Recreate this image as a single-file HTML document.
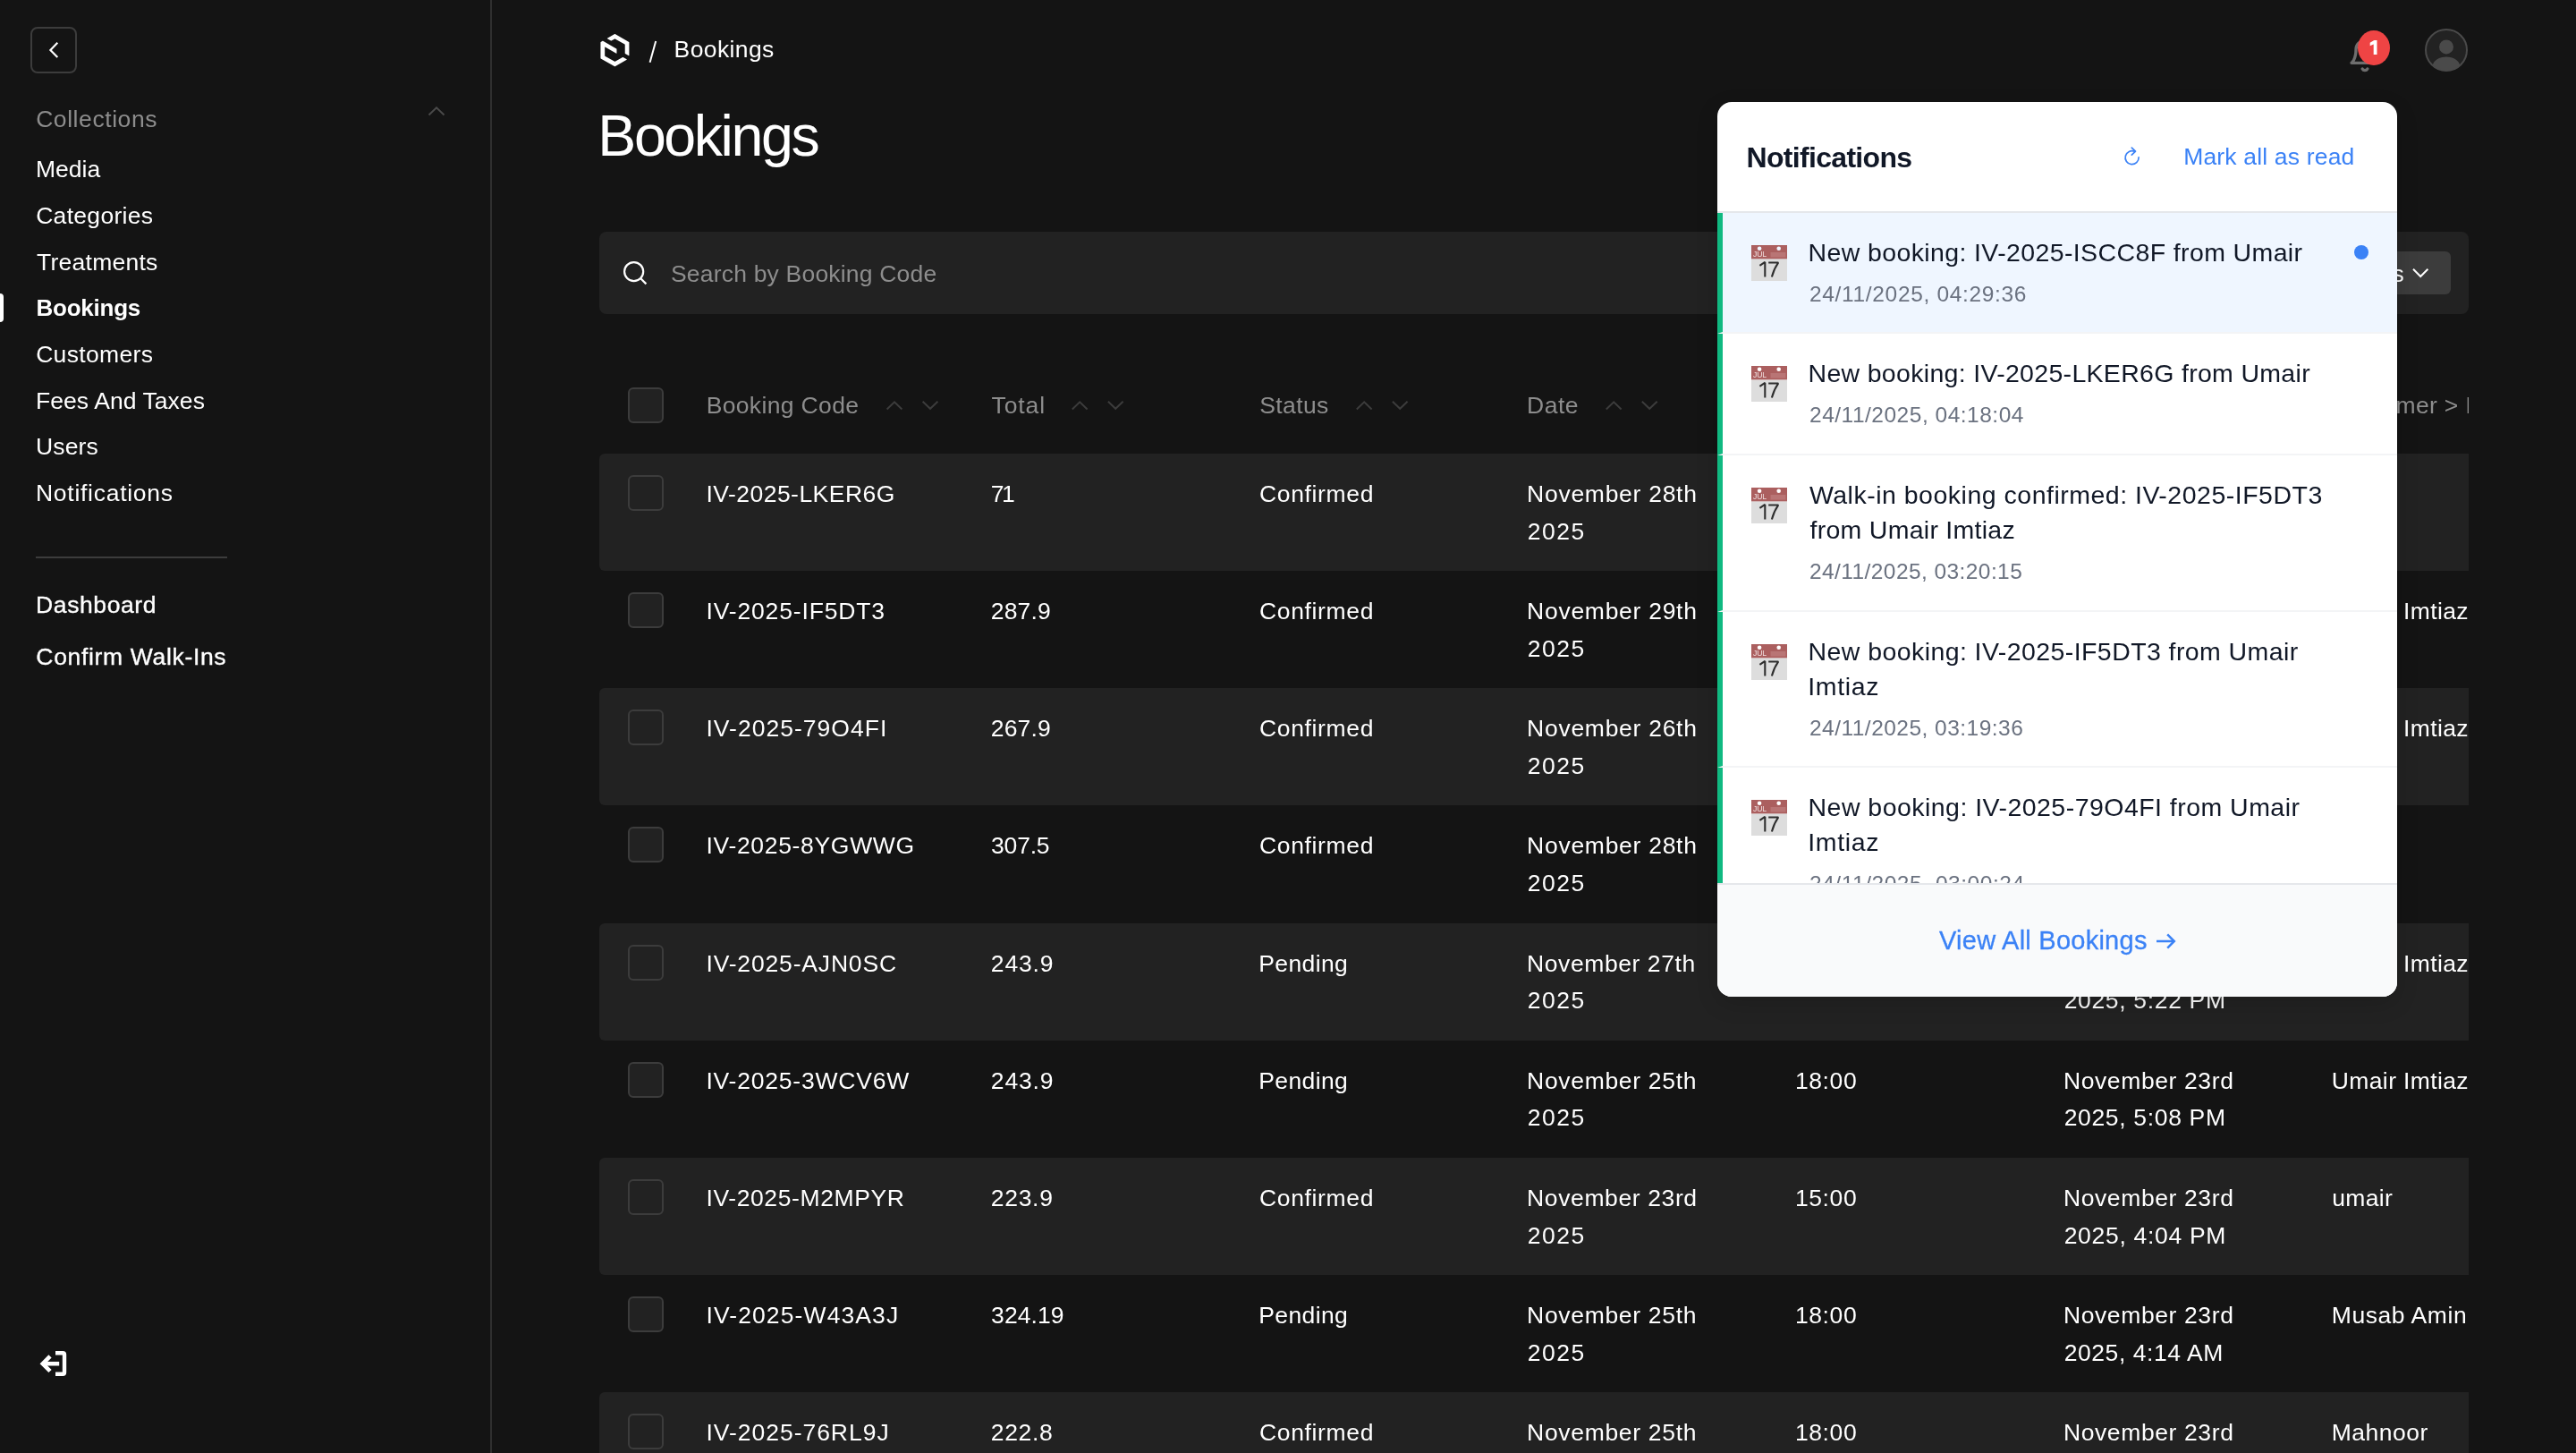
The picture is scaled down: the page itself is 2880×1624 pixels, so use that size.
<!DOCTYPE html>
<html><head><meta charset="utf-8"><title>Bookings</title>
<style>
html,body{margin:0;padding:0;background:#141414;}
body{width:2880px;height:1624px;overflow:hidden;position:relative;font-family:"Liberation Sans",sans-serif;}
.abs{position:absolute;}
.t{position:absolute;white-space:pre;font-family:"Liberation Sans",sans-serif;}
svg{overflow:visible;display:block}
#root{position:absolute;left:0;top:0;width:2880px;height:1624px;will-change:transform;transform:translateZ(0);}
</style></head><body><div id="root">
<div class="abs" style="left:548px;top:0;width:2px;height:1624px;background:#2f2f2f"></div>
<div class="abs" style="left:34px;top:30px;width:52px;height:52px;border:2px solid #3c3c3c;border-radius:8px;box-sizing:border-box"></div>
<svg class="abs" style="left:34px;top:30px" width="52" height="52" viewBox="0 0 52 52"><path d="M30.3 17.7 L22.4 25.9 L30.3 34.1" fill="none" stroke="#fff" stroke-width="2.2" stroke-linecap="butt" stroke-linejoin="miter"/></svg>
<span class="t " style="left:40.15px;top:115.51px;font-size:26.5px;line-height:34px;color:#8d8d8d;letter-spacing:0.570px;">Collections</span>
<svg class="abs" style="left:476px;top:114px" width="24" height="20" viewBox="0 0 24 20"><path d="M3.5 14.5 L12 6.4 L20.5 14.5" fill="none" stroke="#4a4a4a" stroke-width="2"/></svg>
<span class="t " style="left:39.90px;top:172.41px;font-size:26.5px;line-height:34px;color:#fff;letter-spacing:0.038px;">Media</span>
<span class="t " style="left:40.15px;top:224.03px;font-size:26.5px;line-height:34px;color:#fff;letter-spacing:0.306px;">Categories</span>
<span class="t " style="left:41.10px;top:275.65px;font-size:26.5px;line-height:34px;color:#fff;letter-spacing:0.250px;">Treatments</span>
<span class="t " style="left:40.50px;top:326.95px;font-size:26px;line-height:34px;color:#fff;font-weight:700;letter-spacing:-0.243px;">Bookings</span>
<span class="t " style="left:40.15px;top:378.89px;font-size:26.5px;line-height:34px;color:#fff;letter-spacing:0.337px;">Customers</span>
<span class="t " style="left:40.00px;top:430.51px;font-size:26.5px;line-height:34px;color:#fff;letter-spacing:0.065px;">Fees And Taxes</span>
<span class="t " style="left:39.90px;top:482.13px;font-size:26.5px;line-height:34px;color:#fff;letter-spacing:0.175px;">Users</span>
<span class="t " style="left:40.00px;top:533.75px;font-size:26.5px;line-height:34px;color:#fff;letter-spacing:0.725px;">Notifications</span>
<div class="abs" style="left:0;top:328px;width:4px;height:32px;background:#fff;border-radius:0 4px 4px 0"></div>
<div class="abs" style="left:40px;top:622px;width:214px;height:2px;background:#3c3c3c"></div>
<span class="t " style="left:40.10px;top:658.61px;font-size:26.5px;line-height:34px;color:#fff;letter-spacing:0.594px;-webkit-text-stroke:0.35px #fff;">Dashboard</span>
<span class="t " style="left:40.35px;top:716.71px;font-size:26.5px;line-height:34px;color:#fff;letter-spacing:0.670px;-webkit-text-stroke:0.35px #fff;">Confirm Walk-Ins</span>
<svg class="abs" style="left:40px;top:1504px" width="40" height="40" viewBox="0 0 40 40"><path d="M22 8.3 H30.2 a1.8 1.8 0 0 1 1.8 1.8 V29.9 a1.8 1.8 0 0 1 -1.8 1.8 H22" fill="none" stroke="#fff" stroke-width="4.4" stroke-linejoin="round"/><path d="M26.2 20.2 H10" fill="none" stroke="#fff" stroke-width="4.6"/><path d="M16 11.9 L7.8 20.2 L16 28.5" fill="none" stroke="#fff" stroke-width="4.6" stroke-linejoin="miter"/></svg>
<svg class="abs" style="left:670.1px;top:37.7px" width="36.3" height="36.3" viewBox="0 0 25 25"><path d="M11.8673 21.2336L4.40922 16.9845C4.31871 16.9309 4.25837 16.8355 4.25837 16.7282V10.1609C4.25837 10.0477 4.38508 9.97616 4.48162 10.0298L13.1404 14.9642C13.2611 15.0358 13.412 14.9464 13.412 14.8093V11.6091C13.412 11.4839 13.3456 11.3647 13.2309 11.2992L2.81624 5.36353C2.72573 5.30989 2.60505 5.30989 2.51454 5.36353L1.15085 6.14422C1.06034 6.19786 1 6.29321 1 6.40048V18.5995C1 18.7068 1.06034 18.8021 1.15085 18.8558L11.8491 24.9583C11.9397 25.0119 12.0603 25.0119 12.1509 24.9583L21.1355 19.8331C21.2562 19.7616 21.2562 19.5948 21.1355 19.5232L18.3357 17.9261C18.2211 17.8605 18.0883 17.8605 17.9737 17.9261L12.175 21.2336C12.0845 21.2872 11.9638 21.2872 11.8733 21.2336H11.8673Z" fill="#fff"/><path d="M22.8491 6.13827L12.1508 0.0417218C12.0603 -0.0119135 11.9397 -0.0119135 11.8491 0.0417218L6.19528 3.2658C6.0746 3.33731 6.0746 3.50418 6.19528 3.57569L8.97092 5.16091C9.08557 5.22646 9.21832 5.22646 9.33296 5.16091L11.8672 3.71872C11.9578 3.66508 12.0784 3.66508 12.1689 3.71872L19.627 7.96782C19.7175 8.02146 19.7778 8.11681 19.7778 8.22408V14.8212C19.7778 14.9464 19.8442 15.0656 19.9589 15.1311L22.7345 16.7104C22.8552 16.7819 23.006 16.6925 23.006 16.5554V6.40048C23.006 6.29321 22.9457 6.19786 22.8552 6.14422L22.8491 6.13827Z" fill="#fff"/></svg>
<svg class="abs" style="left:720px;top:40px" width="20" height="36" viewBox="0 0 20 36"><path d="M13.2 5.9 L6.6 29.8" stroke="#fff" stroke-width="2" fill="none"/></svg>
<span class="t " style="left:753.60px;top:38.21px;font-size:26.5px;line-height:34px;color:#fff;letter-spacing:0.393px;">Bookings</span>
<svg class="abs" style="left:2624px;top:41.7px" width="40" height="40" viewBox="0 0 24 24" fill="none" stroke="#6e6e6e" stroke-width="2" stroke-linecap="round" stroke-linejoin="round"><path d="M6 8a6 6 0 0 1 12 0c0 7 3 9 3 9H3s3-2 3-9"/><path d="M10.3 21a1.94 1.94 0 0 0 3.4 0"/></svg>
<div class="abs" style="left:2635.9px;top:33.9px;width:36.2px;height:39.3px;border-radius:50%;background:#ef4444"></div>
<svg class="abs" style="left:2640px;top:40px" width="30" height="30" viewBox="2640 40 30 30"><path d="M2654.3 45.1 H2657.5 V61 H2653.7 V49.4 L2649.7 51.2 V47.8 Z" fill="#fff"/></svg>
<svg class="abs" style="left:2710px;top:31px" width="50" height="50" viewBox="0 0 25 25"><circle cx="12.5" cy="12.5" r="11.5" fill="#222222" stroke="#4a4a4a" stroke-width="1"/><circle cx="12.5" cy="10.73" r="3.98" fill="#4a4a4a"/><path d="M12.5,24a11.44,11.44,0,0,0,7.66-2.94c-.5-2.71-3.73-4.8-7.66-4.8s-7.16,2.09-7.66,4.8A11.44,11.44,0,0,0,12.5,24Z" fill="#4a4a4a"/></svg>
<span class="t " style="left:668.35px;top:109.74px;font-size:64.5px;line-height:84px;color:#fff;letter-spacing:-2.436px;">Bookings</span>
<div class="abs" style="left:670px;top:259px;width:2090px;height:92px;background:#222222;border-radius:8px"></div>
<svg class="abs" style="left:690px;top:286px" width="40" height="40" viewBox="0 0 40 40"><circle cx="18.65" cy="17.6" r="10.55" fill="none" stroke="#fff" stroke-width="2.2"/><path d="M26.1 25.05 L32.4 31.35" stroke="#fff" stroke-width="2.2" fill="none"/></svg>
<span class="t " style="left:750.00px;top:289.11px;font-size:26.5px;line-height:34px;color:#8d8d8d;letter-spacing:0.193px;">Search by Booking Code</span>
<div class="abs" style="left:2560px;top:281px;width:180px;height:48px;background:#3c3c3c;border-radius:6px"></div>
<span class="t " style="left:2608.00px;top:288.51px;font-size:26.5px;line-height:34px;color:#fff;letter-spacing:1.250px;">Filters</span>
<svg class="abs" style="left:2694px;top:294px" width="24" height="22" viewBox="0 0 24 22"><path d="M4 6.8 L12.2 15 L20.4 6.8" fill="none" stroke="#fff" stroke-width="2"/></svg>
<div class="abs" id="tbl" style="left:670px;top:400px;width:2090px;height:1224px;overflow:hidden">
<div class="abs" style="left:32px;top:33.0px;width:40px;height:40px;box-sizing:border-box;border:2px solid #3c3c3c;background:#222222;border-radius:6px"></div>
<span class="t " style="left:119.70px;top:35.61px;font-size:26.5px;line-height:34px;color:#8d8d8d;letter-spacing:0.345px;">Booking Code</span>
<svg class="abs" style="left:0;top:0" width="2090" height="120"><path d="M321.6 57.5 L330.0 49.4 L338.4 57.5" fill="none" stroke="#3c3c3c" stroke-width="2"/></svg>
<svg class="abs" style="left:0;top:0" width="2090" height="120"><path d="M361.6 48.7 L370.0 56.8 L378.4 48.7" fill="none" stroke="#3c3c3c" stroke-width="2"/></svg>
<span class="t " style="left:438.60px;top:35.61px;font-size:26.5px;line-height:34px;color:#8d8d8d;letter-spacing:0.887px;">Total</span>
<svg class="abs" style="left:0;top:0" width="2090" height="120"><path d="M528.8 57.5 L537.2 49.4 L545.6 57.5" fill="none" stroke="#3c3c3c" stroke-width="2"/></svg>
<svg class="abs" style="left:0;top:0" width="2090" height="120"><path d="M568.9 48.7 L577.2 56.8 L585.6 48.7" fill="none" stroke="#3c3c3c" stroke-width="2"/></svg>
<span class="t " style="left:738.20px;top:35.61px;font-size:26.5px;line-height:34px;color:#8d8d8d;letter-spacing:0.400px;">Status</span>
<svg class="abs" style="left:0;top:0" width="2090" height="120"><path d="M846.8 57.5 L855.2 49.4 L863.6 57.5" fill="none" stroke="#3c3c3c" stroke-width="2"/></svg>
<svg class="abs" style="left:0;top:0" width="2090" height="120"><path d="M886.9 48.7 L895.2 56.8 L903.6 48.7" fill="none" stroke="#3c3c3c" stroke-width="2"/></svg>
<span class="t " style="left:1037.10px;top:35.61px;font-size:26.5px;line-height:34px;color:#8d8d8d;letter-spacing:0.500px;">Date</span>
<svg class="abs" style="left:0;top:0" width="2090" height="120"><path d="M1125.8 57.5 L1134.2 49.4 L1142.6 57.5" fill="none" stroke="#3c3c3c" stroke-width="2"/></svg>
<svg class="abs" style="left:0;top:0" width="2090" height="120"><path d="M1165.8 48.7 L1174.2 56.8 L1182.7 48.7" fill="none" stroke="#3c3c3c" stroke-width="2"/></svg>
<span class="t " style="left:1338.40px;top:35.61px;font-size:26.5px;line-height:34px;color:#8d8d8d;letter-spacing:0.500px;">Time</span>
<svg class="abs" style="left:0;top:0" width="2090" height="120"><path d="M1425.6 57.5 L1434.0 49.4 L1442.4 57.5" fill="none" stroke="#3c3c3c" stroke-width="2"/></svg>
<svg class="abs" style="left:0;top:0" width="2090" height="120"><path d="M1465.7 48.7 L1474.1 56.8 L1482.5 48.7" fill="none" stroke="#3c3c3c" stroke-width="2"/></svg>
<span class="t " style="left:1637.65px;top:35.61px;font-size:26.5px;line-height:34px;color:#8d8d8d;letter-spacing:0.500px;">Created At</span>
<svg class="abs" style="left:0;top:0" width="2090" height="120"><path d="M1791.6 57.5 L1800.0 49.4 L1808.4 57.5" fill="none" stroke="#3c3c3c" stroke-width="2"/></svg>
<svg class="abs" style="left:0;top:0" width="2090" height="120"><path d="M1831.7 48.7 L1840.1 56.8 L1848.5 48.7" fill="none" stroke="#3c3c3c" stroke-width="2"/></svg>
<span class="t " style="left:1937.55px;top:35.61px;font-size:26.5px;line-height:34px;color:#8d8d8d;letter-spacing:0.344px;">Customer &gt; Name</span>
<div class="abs" style="left:0;top:106.9px;width:2200px;height:131.2px;background:#222222;border-radius:6px 0 0 6px"></div>
<div class="abs" style="left:32px;top:130.9px;width:40px;height:40px;box-sizing:border-box;border:2px solid #3c3c3c;background:#222222;border-radius:6px"></div>
<span class="t " style="left:119.45px;top:135.01px;font-size:26.5px;line-height:34px;color:#fff;letter-spacing:0.473px;">IV-2025-LKER6G</span>
<span class="t " style="left:437.85px;top:135.01px;font-size:26.5px;line-height:34px;color:#fff;letter-spacing:-2.700px;">71</span>
<span class="t " style="left:737.95px;top:135.01px;font-size:26.5px;line-height:34px;color:#fff;letter-spacing:0.662px;">Confirmed</span>
<span class="t " style="left:1037.10px;top:135.01px;font-size:26.5px;line-height:34px;color:#fff;letter-spacing:0.721px;">November 28th</span>
<span class="t " style="left:1037.85px;top:176.71px;font-size:26.5px;line-height:34px;color:#fff;letter-spacing:1.483px;">2025</span>
<span class="t " style="left:1336.90px;top:135.01px;font-size:26.5px;line-height:34px;color:#fff;letter-spacing:0.613px;">10:00</span>
<span class="t " style="left:1636.90px;top:135.01px;font-size:26.5px;line-height:34px;color:#fff;letter-spacing:0.721px;">November 24th</span>
<span class="t " style="left:1637.65px;top:176.71px;font-size:26.5px;line-height:34px;color:#fff;letter-spacing:0.800px;">2025, 4:18 AM</span>
<span class="t " style="left:1936.80px;top:135.01px;font-size:26.5px;line-height:34px;color:#fff;letter-spacing:0.688px;">Umair</span>
<div class="abs" style="left:32px;top:262.0px;width:40px;height:40px;box-sizing:border-box;border:2px solid #3c3c3c;background:#222222;border-radius:6px"></div>
<span class="t " style="left:119.45px;top:266.16px;font-size:26.5px;line-height:34px;color:#fff;letter-spacing:0.850px;">IV-2025-IF5DT3</span>
<span class="t " style="left:437.85px;top:266.16px;font-size:26.5px;line-height:34px;color:#fff;letter-spacing:0.137px;">287.9</span>
<span class="t " style="left:737.95px;top:266.16px;font-size:26.5px;line-height:34px;color:#fff;letter-spacing:0.662px;">Confirmed</span>
<span class="t " style="left:1037.10px;top:266.16px;font-size:26.5px;line-height:34px;color:#fff;letter-spacing:0.721px;">November 29th</span>
<span class="t " style="left:1037.85px;top:307.86px;font-size:26.5px;line-height:34px;color:#fff;letter-spacing:1.483px;">2025</span>
<span class="t " style="left:1336.90px;top:266.16px;font-size:26.5px;line-height:34px;color:#fff;letter-spacing:0.613px;">12:00</span>
<span class="t " style="left:1636.90px;top:266.16px;font-size:26.5px;line-height:34px;color:#fff;letter-spacing:0.721px;">November 24th</span>
<span class="t " style="left:1637.65px;top:307.86px;font-size:26.5px;line-height:34px;color:#fff;letter-spacing:0.800px;">2025, 3:19 AM</span>
<span class="t " style="left:1936.80px;top:266.16px;font-size:26.5px;line-height:34px;color:#fff;letter-spacing:0.373px;">Umair Imtiaz</span>
<div class="abs" style="left:0;top:369.2px;width:2200px;height:131.2px;background:#222222;border-radius:6px 0 0 6px"></div>
<div class="abs" style="left:32px;top:393.2px;width:40px;height:40px;box-sizing:border-box;border:2px solid #3c3c3c;background:#222222;border-radius:6px"></div>
<span class="t " style="left:119.45px;top:397.31px;font-size:26.5px;line-height:34px;color:#fff;letter-spacing:1.023px;">IV-2025-79O4FI</span>
<span class="t " style="left:437.85px;top:397.31px;font-size:26.5px;line-height:34px;color:#fff;letter-spacing:0.137px;">267.9</span>
<span class="t " style="left:737.95px;top:397.31px;font-size:26.5px;line-height:34px;color:#fff;letter-spacing:0.662px;">Confirmed</span>
<span class="t " style="left:1037.10px;top:397.31px;font-size:26.5px;line-height:34px;color:#fff;letter-spacing:0.721px;">November 26th</span>
<span class="t " style="left:1037.85px;top:439.01px;font-size:26.5px;line-height:34px;color:#fff;letter-spacing:1.483px;">2025</span>
<span class="t " style="left:1336.90px;top:397.31px;font-size:26.5px;line-height:34px;color:#fff;letter-spacing:0.613px;">14:00</span>
<span class="t " style="left:1636.90px;top:397.31px;font-size:26.5px;line-height:34px;color:#fff;letter-spacing:0.721px;">November 24th</span>
<span class="t " style="left:1637.65px;top:439.01px;font-size:26.5px;line-height:34px;color:#fff;letter-spacing:0.800px;">2025, 3:00 AM</span>
<span class="t " style="left:1936.80px;top:397.31px;font-size:26.5px;line-height:34px;color:#fff;letter-spacing:0.373px;">Umair Imtiaz</span>
<div class="abs" style="left:32px;top:524.4px;width:40px;height:40px;box-sizing:border-box;border:2px solid #3c3c3c;background:#222222;border-radius:6px"></div>
<span class="t " style="left:119.45px;top:528.46px;font-size:26.5px;line-height:34px;color:#fff;letter-spacing:0.681px;">IV-2025-8YGWWG</span>
<span class="t " style="left:438.10px;top:528.46px;font-size:26.5px;line-height:34px;color:#fff;letter-spacing:-0.213px;">307.5</span>
<span class="t " style="left:737.95px;top:528.46px;font-size:26.5px;line-height:34px;color:#fff;letter-spacing:0.662px;">Confirmed</span>
<span class="t " style="left:1037.10px;top:528.46px;font-size:26.5px;line-height:34px;color:#fff;letter-spacing:0.721px;">November 28th</span>
<span class="t " style="left:1037.85px;top:570.16px;font-size:26.5px;line-height:34px;color:#fff;letter-spacing:1.483px;">2025</span>
<span class="t " style="left:1336.90px;top:528.46px;font-size:26.5px;line-height:34px;color:#fff;letter-spacing:0.613px;">16:00</span>
<span class="t " style="left:1636.90px;top:528.46px;font-size:26.5px;line-height:34px;color:#fff;letter-spacing:0.612px;">November 23rd</span>
<span class="t " style="left:1637.65px;top:570.16px;font-size:26.5px;line-height:34px;color:#fff;letter-spacing:0.800px;">2025, 6:10 PM</span>
<span class="t " style="left:1936.80px;top:528.46px;font-size:26.5px;line-height:34px;color:#fff;letter-spacing:0.688px;">Umair</span>
<div class="abs" style="left:0;top:631.5px;width:2200px;height:131.2px;background:#222222;border-radius:6px 0 0 6px"></div>
<div class="abs" style="left:32px;top:655.5px;width:40px;height:40px;box-sizing:border-box;border:2px solid #3c3c3c;background:#222222;border-radius:6px"></div>
<span class="t " style="left:119.45px;top:659.61px;font-size:26.5px;line-height:34px;color:#fff;letter-spacing:0.835px;">IV-2025-AJN0SC</span>
<span class="t " style="left:437.85px;top:659.61px;font-size:26.5px;line-height:34px;color:#fff;letter-spacing:0.837px;">243.9</span>
<span class="t " style="left:737.20px;top:659.61px;font-size:26.5px;line-height:34px;color:#fff;letter-spacing:0.392px;">Pending</span>
<span class="t " style="left:1037.10px;top:659.61px;font-size:26.5px;line-height:34px;color:#fff;letter-spacing:0.571px;">November 27th</span>
<span class="t " style="left:1037.85px;top:701.31px;font-size:26.5px;line-height:34px;color:#fff;letter-spacing:1.483px;">2025</span>
<span class="t " style="left:1336.90px;top:659.61px;font-size:26.5px;line-height:34px;color:#fff;letter-spacing:0.613px;">18:00</span>
<span class="t " style="left:1636.90px;top:659.61px;font-size:26.5px;line-height:34px;color:#fff;letter-spacing:0.612px;">November 23rd</span>
<span class="t " style="left:1637.65px;top:701.31px;font-size:26.5px;line-height:34px;color:#fff;letter-spacing:0.667px;">2025, 5:22 PM</span>
<span class="t " style="left:1936.80px;top:659.61px;font-size:26.5px;line-height:34px;color:#fff;letter-spacing:0.373px;">Umair Imtiaz</span>
<div class="abs" style="left:32px;top:786.7px;width:40px;height:40px;box-sizing:border-box;border:2px solid #3c3c3c;background:#222222;border-radius:6px"></div>
<span class="t " style="left:119.45px;top:790.76px;font-size:26.5px;line-height:34px;color:#fff;letter-spacing:0.788px;">IV-2025-3WCV6W</span>
<span class="t " style="left:437.85px;top:790.76px;font-size:26.5px;line-height:34px;color:#fff;letter-spacing:0.837px;">243.9</span>
<span class="t " style="left:737.20px;top:790.76px;font-size:26.5px;line-height:34px;color:#fff;letter-spacing:0.392px;">Pending</span>
<span class="t " style="left:1037.10px;top:790.76px;font-size:26.5px;line-height:34px;color:#fff;letter-spacing:0.679px;">November 25th</span>
<span class="t " style="left:1037.85px;top:832.46px;font-size:26.5px;line-height:34px;color:#fff;letter-spacing:1.483px;">2025</span>
<span class="t " style="left:1336.90px;top:790.76px;font-size:26.5px;line-height:34px;color:#fff;letter-spacing:0.613px;">18:00</span>
<span class="t " style="left:1636.90px;top:790.76px;font-size:26.5px;line-height:34px;color:#fff;letter-spacing:0.612px;">November 23rd</span>
<span class="t " style="left:1637.65px;top:832.46px;font-size:26.5px;line-height:34px;color:#fff;letter-spacing:0.667px;">2025, 5:08 PM</span>
<span class="t " style="left:1936.80px;top:790.76px;font-size:26.5px;line-height:34px;color:#fff;letter-spacing:0.373px;">Umair Imtiaz</span>
<div class="abs" style="left:0;top:893.8px;width:2200px;height:131.2px;background:#222222;border-radius:6px 0 0 6px"></div>
<div class="abs" style="left:32px;top:917.8px;width:40px;height:40px;box-sizing:border-box;border:2px solid #3c3c3c;background:#222222;border-radius:6px"></div>
<span class="t " style="left:119.45px;top:921.91px;font-size:26.5px;line-height:34px;color:#fff;letter-spacing:0.604px;">IV-2025-M2MPYR</span>
<span class="t " style="left:437.85px;top:921.91px;font-size:26.5px;line-height:34px;color:#fff;letter-spacing:0.688px;">223.9</span>
<span class="t " style="left:737.95px;top:921.91px;font-size:26.5px;line-height:34px;color:#fff;letter-spacing:0.662px;">Confirmed</span>
<span class="t " style="left:1037.10px;top:921.91px;font-size:26.5px;line-height:34px;color:#fff;letter-spacing:0.612px;">November 23rd</span>
<span class="t " style="left:1037.85px;top:963.61px;font-size:26.5px;line-height:34px;color:#fff;letter-spacing:1.483px;">2025</span>
<span class="t " style="left:1336.90px;top:921.91px;font-size:26.5px;line-height:34px;color:#fff;letter-spacing:0.613px;">15:00</span>
<span class="t " style="left:1636.90px;top:921.91px;font-size:26.5px;line-height:34px;color:#fff;letter-spacing:0.612px;">November 23rd</span>
<span class="t " style="left:1637.65px;top:963.61px;font-size:26.5px;line-height:34px;color:#fff;letter-spacing:0.700px;">2025, 4:04 PM</span>
<span class="t " style="left:1937.30px;top:921.91px;font-size:26.5px;line-height:34px;color:#fff;letter-spacing:0.300px;">umair</span>
<div class="abs" style="left:32px;top:1049.0px;width:40px;height:40px;box-sizing:border-box;border:2px solid #3c3c3c;background:#222222;border-radius:6px"></div>
<span class="t " style="left:119.45px;top:1053.06px;font-size:26.5px;line-height:34px;color:#fff;letter-spacing:1.112px;">IV-2025-W43A3J</span>
<span class="t " style="left:438.10px;top:1053.06px;font-size:26.5px;line-height:34px;color:#fff;letter-spacing:0.090px;">324.19</span>
<span class="t " style="left:737.20px;top:1053.06px;font-size:26.5px;line-height:34px;color:#fff;letter-spacing:0.392px;">Pending</span>
<span class="t " style="left:1037.10px;top:1053.06px;font-size:26.5px;line-height:34px;color:#fff;letter-spacing:0.679px;">November 25th</span>
<span class="t " style="left:1037.85px;top:1094.76px;font-size:26.5px;line-height:34px;color:#fff;letter-spacing:1.483px;">2025</span>
<span class="t " style="left:1336.90px;top:1053.06px;font-size:26.5px;line-height:34px;color:#fff;letter-spacing:0.613px;">18:00</span>
<span class="t " style="left:1636.90px;top:1053.06px;font-size:26.5px;line-height:34px;color:#fff;letter-spacing:0.612px;">November 23rd</span>
<span class="t " style="left:1637.65px;top:1094.76px;font-size:26.5px;line-height:34px;color:#fff;letter-spacing:0.575px;">2025, 4:14 AM</span>
<span class="t " style="left:1936.80px;top:1053.06px;font-size:26.5px;line-height:34px;color:#fff;letter-spacing:0.561px;">Musab Amin</span>
<div class="abs" style="left:0;top:1156.1px;width:2200px;height:131.2px;background:#222222;border-radius:6px 0 0 6px"></div>
<div class="abs" style="left:32px;top:1180.1px;width:40px;height:40px;box-sizing:border-box;border:2px solid #3c3c3c;background:#222222;border-radius:6px"></div>
<span class="t " style="left:119.45px;top:1184.21px;font-size:26.5px;line-height:34px;color:#fff;letter-spacing:0.977px;">IV-2025-76RL9J</span>
<span class="t " style="left:437.85px;top:1184.21px;font-size:26.5px;line-height:34px;color:#fff;letter-spacing:0.625px;">222.8</span>
<span class="t " style="left:737.95px;top:1184.21px;font-size:26.5px;line-height:34px;color:#fff;letter-spacing:0.662px;">Confirmed</span>
<span class="t " style="left:1037.10px;top:1184.21px;font-size:26.5px;line-height:34px;color:#fff;letter-spacing:0.679px;">November 25th</span>
<span class="t " style="left:1037.85px;top:1225.91px;font-size:26.5px;line-height:34px;color:#fff;letter-spacing:1.483px;">2025</span>
<span class="t " style="left:1336.90px;top:1184.21px;font-size:26.5px;line-height:34px;color:#fff;letter-spacing:0.613px;">18:00</span>
<span class="t " style="left:1636.90px;top:1184.21px;font-size:26.5px;line-height:34px;color:#fff;letter-spacing:0.612px;">November 23rd</span>
<span class="t " style="left:1637.65px;top:1225.91px;font-size:26.5px;line-height:34px;color:#fff;letter-spacing:0.800px;">2025, 3:40 AM</span>
<span class="t " style="left:1936.80px;top:1184.21px;font-size:26.5px;line-height:34px;color:#fff;letter-spacing:0.492px;">Mahnoor</span>
</div>
<div class="abs" id="pop" style="left:1920px;top:114px;width:760px;height:1000px;background:#fff;border-radius:16px;overflow:hidden;box-shadow:0 8px 24px rgba(0,0,0,0.15)">
<div class="abs" style="left:0;top:122px;width:760px;height:2px;background:#e5e7eb"></div>
<span class="t " style="left:32.60px;top:40.81px;font-size:32px;line-height:42px;color:#111827;font-weight:700;letter-spacing:-0.692px;">Notifications</span>
<svg class="abs" style="left:2368px;top:160px;transform:translate(-1920px,-114px)" width="32" height="32" viewBox="0 0 32 32" fill="none" stroke="#3b82f6" stroke-width="1.7" stroke-linecap="round" stroke-linejoin="round"><path d="M23.1 15.9 A7.5 7.5 0 1 1 18.6 9.3"/><path d="M15.3 5.2 L19.5 9.2 L15.3 13.2"/></svg>
<span class="t " style="left:521.20px;top:43.81px;font-size:26.5px;line-height:34px;color:#3b82f6;letter-spacing:0.173px;">Mark all as read</span>
<div class="abs" style="left:0;top:124px;width:760px;height:749px;overflow:hidden">
<div class="abs" style="left:0;top:0px;width:760px;height:135px;background:#eff6ff;border-left:6px solid #10b981;border-bottom:2px solid #f3f4f6;box-sizing:border-box"></div>
<svg class="abs" style="left:38.0px;top:36.4px" width="40" height="40" viewBox="0 0 40 40"><rect x="0" y="0" width="40" height="15.6" fill="#ab5f5f"/><rect x="0" y="15.6" width="40" height="24.4" fill="#dddddd"/><circle cx="9.1" cy="3.8" r="2.3" fill="#eff6ff"/><circle cx="30.7" cy="3.8" r="2.3" fill="#eff6ff"/><text x="2" y="13.4" font-family="Liberation Sans, sans-serif" font-size="8.6" fill="#f3e4e4" textLength="15">JUL</text><rect x="21.5" y="8" width="17" height="5.6" fill="#b97575"/><path d="M9.4 22.9 L15.3 18.9 V35.6 M19.2 19.5 H30.2 Q25.2 26.5 22.9 35.6" fill="none" stroke="#2e2e2e" stroke-width="2.1" stroke-linejoin="bevel"/></svg>
<span class="t " style="left:101.55px;top:25.62px;font-size:28.5px;line-height:37px;color:#111827;letter-spacing:0.378px;">New booking: IV-2025-ISCC8F from Umair</span>
<span class="t " style="left:103.00px;top:74.61px;font-size:24.5px;line-height:32px;color:#6b7280;letter-spacing:0.668px;">24/11/2025, 04:29:36</span>
<div class="abs" style="left:712px;top:36px;width:16px;height:16px;border-radius:50%;background:#3b82f6"></div>
<div class="abs" style="left:0;top:135px;width:760px;height:136px;background:#ffffff;border-left:6px solid #10b981;border-bottom:2px solid #f3f4f6;box-sizing:border-box"></div>
<svg class="abs" style="left:38.0px;top:171.4px" width="40" height="40" viewBox="0 0 40 40"><rect x="0" y="0" width="40" height="15.6" fill="#ab5f5f"/><rect x="0" y="15.6" width="40" height="24.4" fill="#dddddd"/><circle cx="9.1" cy="3.8" r="2.3" fill="#ffffff"/><circle cx="30.7" cy="3.8" r="2.3" fill="#ffffff"/><text x="2" y="13.4" font-family="Liberation Sans, sans-serif" font-size="8.6" fill="#f3e4e4" textLength="15">JUL</text><rect x="21.5" y="8" width="17" height="5.6" fill="#b97575"/><path d="M9.4 22.9 L15.3 18.9 V35.6 M19.2 19.5 H30.2 Q25.2 26.5 22.9 35.6" fill="none" stroke="#2e2e2e" stroke-width="2.1" stroke-linejoin="bevel"/></svg>
<span class="t " style="left:101.55px;top:160.62px;font-size:28.5px;line-height:37px;color:#111827;letter-spacing:0.309px;">New booking: IV-2025-LKER6G from Umair</span>
<span class="t " style="left:103.00px;top:209.61px;font-size:24.5px;line-height:32px;color:#6b7280;letter-spacing:0.508px;">24/11/2025, 04:18:04</span>
<div class="abs" style="left:0;top:271px;width:760px;height:175px;background:#ffffff;border-left:6px solid #10b981;border-bottom:2px solid #f3f4f6;box-sizing:border-box"></div>
<svg class="abs" style="left:38.0px;top:307.4px" width="40" height="40" viewBox="0 0 40 40"><rect x="0" y="0" width="40" height="15.6" fill="#ab5f5f"/><rect x="0" y="15.6" width="40" height="24.4" fill="#dddddd"/><circle cx="9.1" cy="3.8" r="2.3" fill="#ffffff"/><circle cx="30.7" cy="3.8" r="2.3" fill="#ffffff"/><text x="2" y="13.4" font-family="Liberation Sans, sans-serif" font-size="8.6" fill="#f3e4e4" textLength="15">JUL</text><rect x="21.5" y="8" width="17" height="5.6" fill="#b97575"/><path d="M9.4 22.9 L15.3 18.9 V35.6 M19.2 19.5 H30.2 Q25.2 26.5 22.9 35.6" fill="none" stroke="#2e2e2e" stroke-width="2.1" stroke-linejoin="bevel"/></svg>
<span class="t " style="left:102.90px;top:296.62px;font-size:28.5px;line-height:37px;color:#111827;letter-spacing:0.501px;">Walk-in booking confirmed: IV-2025-IF5DT3</span>
<span class="t " style="left:103.55px;top:335.82px;font-size:28.5px;line-height:37px;color:#111827;letter-spacing:0.272px;">from Umair Imtiaz</span>
<span class="t " style="left:103.00px;top:384.81px;font-size:24.5px;line-height:32px;color:#6b7280;letter-spacing:0.421px;">24/11/2025, 03:20:15</span>
<div class="abs" style="left:0;top:446px;width:760px;height:174px;background:#ffffff;border-left:6px solid #10b981;border-bottom:2px solid #f3f4f6;box-sizing:border-box"></div>
<svg class="abs" style="left:38.0px;top:482.4px" width="40" height="40" viewBox="0 0 40 40"><rect x="0" y="0" width="40" height="15.6" fill="#ab5f5f"/><rect x="0" y="15.6" width="40" height="24.4" fill="#dddddd"/><circle cx="9.1" cy="3.8" r="2.3" fill="#ffffff"/><circle cx="30.7" cy="3.8" r="2.3" fill="#ffffff"/><text x="2" y="13.4" font-family="Liberation Sans, sans-serif" font-size="8.6" fill="#f3e4e4" textLength="15">JUL</text><rect x="21.5" y="8" width="17" height="5.6" fill="#b97575"/><path d="M9.4 22.9 L15.3 18.9 V35.6 M19.2 19.5 H30.2 Q25.2 26.5 22.9 35.6" fill="none" stroke="#2e2e2e" stroke-width="2.1" stroke-linejoin="bevel"/></svg>
<span class="t " style="left:101.55px;top:471.62px;font-size:28.5px;line-height:37px;color:#111827;letter-spacing:0.420px;">New booking: IV-2025-IF5DT3 from Umair</span>
<span class="t " style="left:101.30px;top:510.82px;font-size:28.5px;line-height:37px;color:#111827;letter-spacing:0.650px;">Imtiaz</span>
<span class="t " style="left:103.00px;top:559.81px;font-size:24.5px;line-height:32px;color:#6b7280;letter-spacing:0.474px;">24/11/2025, 03:19:36</span>
<div class="abs" style="left:0;top:620px;width:760px;height:174px;background:#ffffff;border-left:6px solid #10b981;border-bottom:2px solid #f3f4f6;box-sizing:border-box"></div>
<svg class="abs" style="left:38.0px;top:656.4px" width="40" height="40" viewBox="0 0 40 40"><rect x="0" y="0" width="40" height="15.6" fill="#ab5f5f"/><rect x="0" y="15.6" width="40" height="24.4" fill="#dddddd"/><circle cx="9.1" cy="3.8" r="2.3" fill="#ffffff"/><circle cx="30.7" cy="3.8" r="2.3" fill="#ffffff"/><text x="2" y="13.4" font-family="Liberation Sans, sans-serif" font-size="8.6" fill="#f3e4e4" textLength="15">JUL</text><rect x="21.5" y="8" width="17" height="5.6" fill="#b97575"/><path d="M9.4 22.9 L15.3 18.9 V35.6 M19.2 19.5 H30.2 Q25.2 26.5 22.9 35.6" fill="none" stroke="#2e2e2e" stroke-width="2.1" stroke-linejoin="bevel"/></svg>
<span class="t " style="left:101.55px;top:645.62px;font-size:28.5px;line-height:37px;color:#111827;letter-spacing:0.464px;">New booking: IV-2025-79O4FI from Umair</span>
<span class="t " style="left:101.30px;top:684.82px;font-size:28.5px;line-height:37px;color:#111827;letter-spacing:0.650px;">Imtiaz</span>
<span class="t " style="left:103.00px;top:733.81px;font-size:24.5px;line-height:32px;color:#6b7280;letter-spacing:0.539px;">24/11/2025, 03:00:24</span>
</div>
<div class="abs" style="left:0;top:873px;width:760px;height:127px;background:#f9fafb;border-top:2px solid #e5e7eb;box-sizing:border-box"></div>
<span class="t " style="left:248.00px;top:917.95px;font-size:29px;line-height:38px;color:#3b82f6;letter-spacing:0.250px;-webkit-text-stroke:0.3px #3b82f6;">View All Bookings</span>
<svg class="abs" style="left:490.9px;top:927.8px" width="22" height="20" viewBox="0 0 22 20" fill="none" stroke="#3b82f6" stroke-width="2.5"><path d="M0 10 H19.4"/><path d="M12.2 2.4 L19.8 10 L12.2 17.6"/></svg>
</div>
</div></body></html>
